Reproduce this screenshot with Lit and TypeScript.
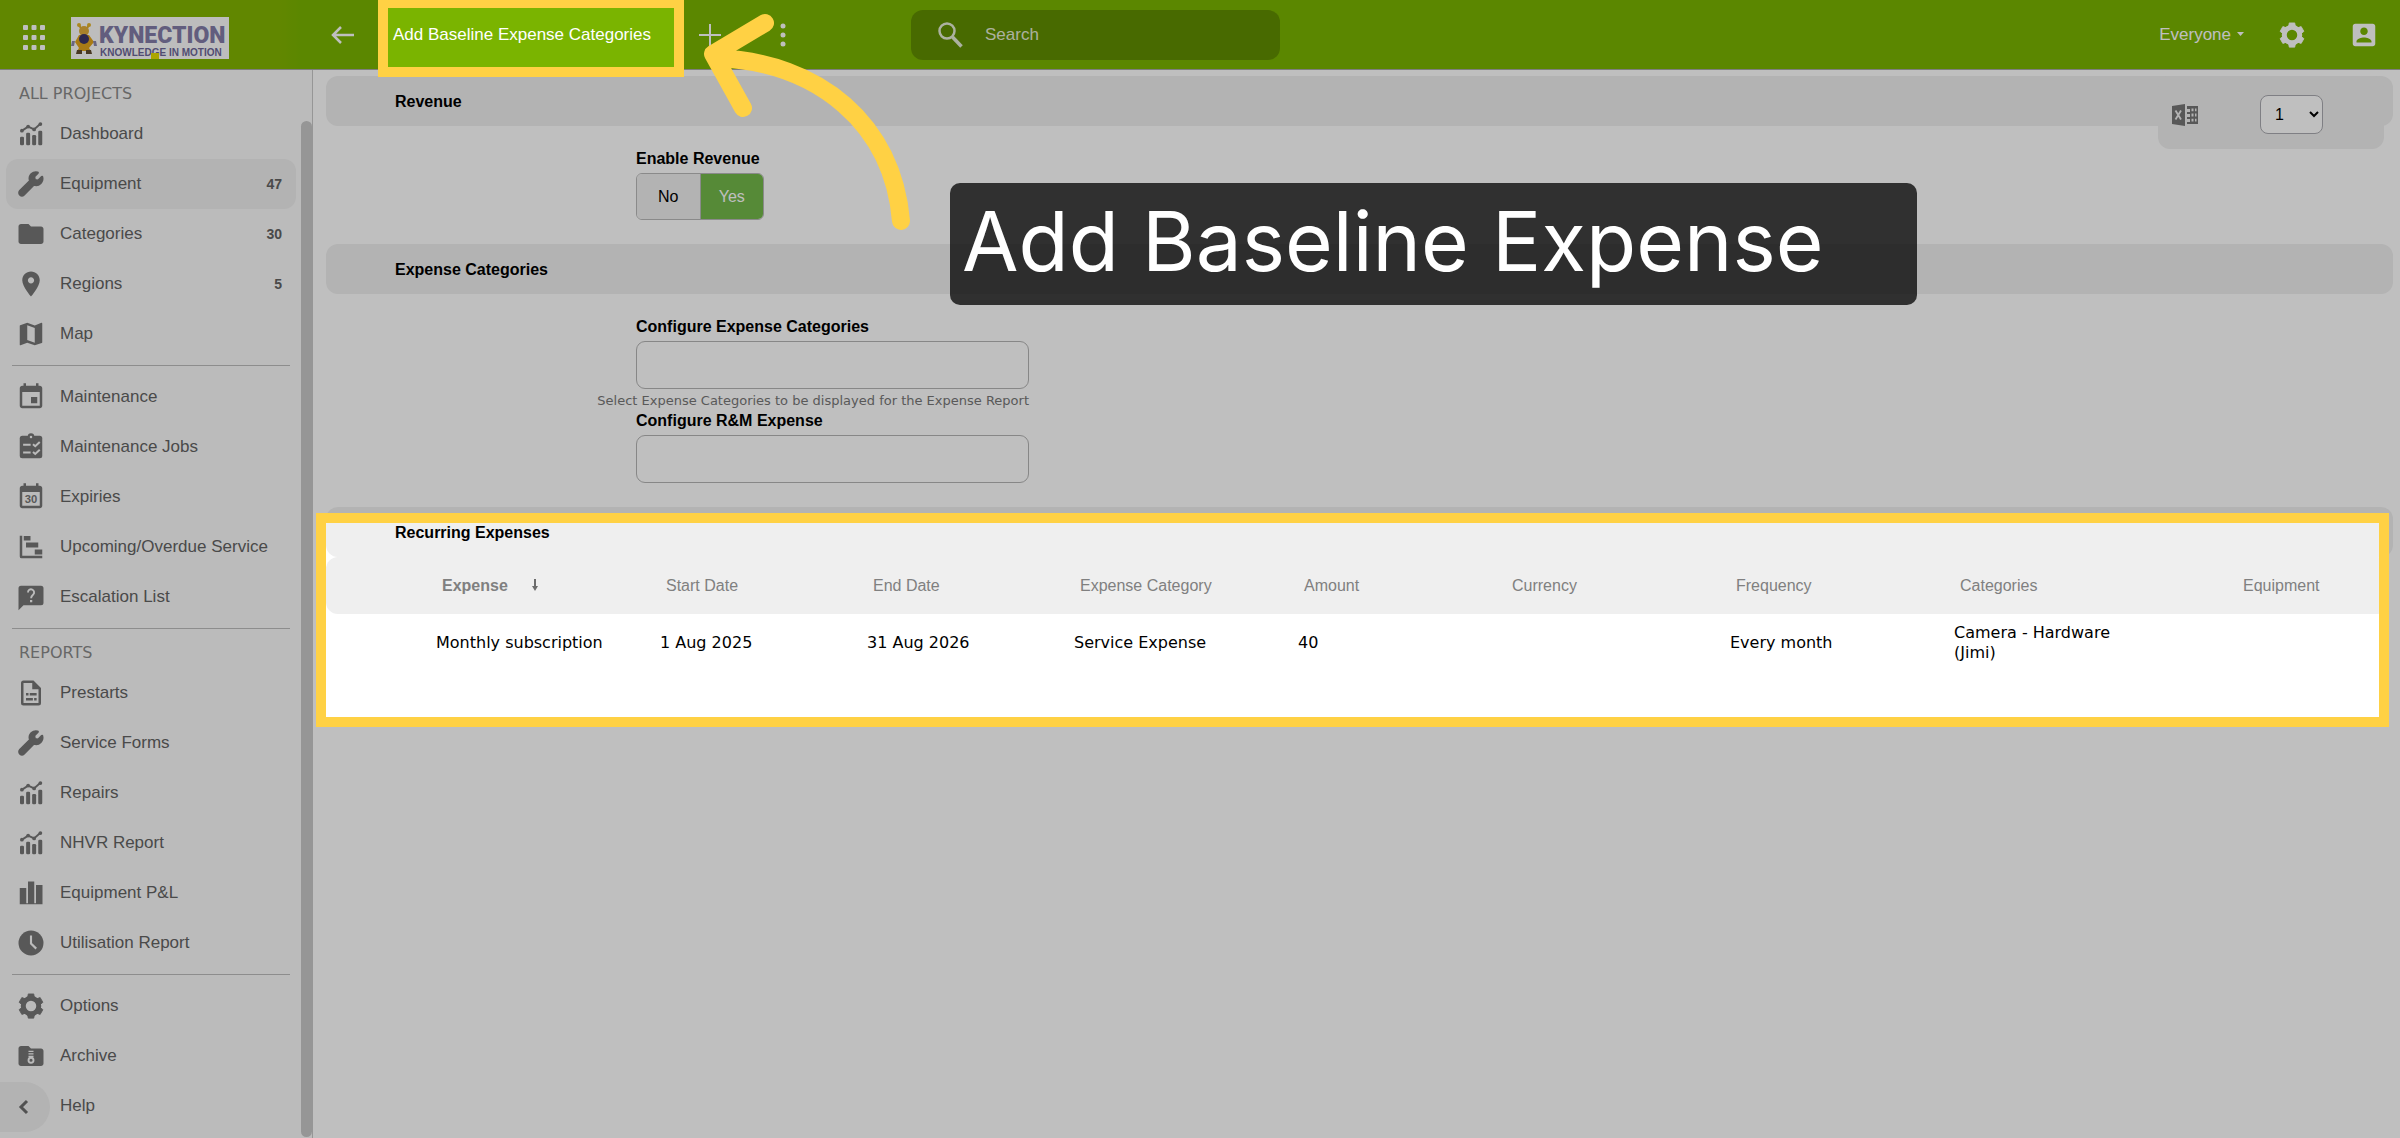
import { LitElement, html, svg, css } from "lit";
import type { SVGTemplateResult } from "lit";
import { customElement, property, state } from "lit/decorators.js";
import { classMap } from "lit/directives/class-map.js";

const WRENCH =
  "M507.73 109.1c-2.24-9.03-13.54-12.09-20.12-5.51l-74.36 74.36-67.88-11.31-11.31-67.88 74.36-74.36c6.62-6.62 3.43-17.9-5.66-20.16-47.38-11.74-99.55.91-136.58 37.93-39.64 39.64-50.55 97.1-34.05 147.2L18.74 402.76c-24.99 24.99-24.99 65.51 0 90.5 24.99 24.99 65.51 24.99 90.5 0l213.21-213.21c50.12 16.71 107.47 5.68 147.37-34.22 37.07-37.07 49.7-89.32 37.91-136.73z";
const CALENDAR =
  "M16 1v2H8V1H6v2H5c-1.11 0-1.99.9-1.99 2L3 19c0 1.1.89 2 2 2h14c1.1 0 2-.9 2-2V5c0-1.1-.9-2-2-2h-1V1h-2zm3 18H5V8h14v11z";

const ICONS: Record<string, SVGTemplateResult> = {
  chart: svg`
    <rect x="3.2" y="14.1" width="3.2" height="6.9" rx="1"/>
    <rect x="8.1" y="10.9" width="3.2" height="10.1" rx="1"/>
    <rect x="12.9" y="12.8" width="3.2" height="8.2" rx="1"/>
    <rect x="17.8" y="9.3" width="3.2" height="11.7" rx="1"/>
    <path d="M4.9 9.3 9.7 6.1l4.8 2.2 4.8-4.3" fill="none" stroke="currentColor" stroke-width="1.5"/>
    <circle cx="4.7" cy="9.3" r="1.5"/><circle cx="9.7" cy="6" r="1.5"/>
    <circle cx="14.5" cy="8.3" r="1.5"/><circle cx="19.5" cy="4" r="1.5"/>`,
  wrench: svg`<g transform="translate(2.4 2.400) scale(.037)"><path d=${WRENCH} stroke="currentColor" stroke-width="36" stroke-linejoin="round"/></g>`,
  folder: svg`<path d="M10 4H4c-1.1 0-1.99.9-1.99 2L2 18c0 1.1.9 2 2 2h16c1.1 0 2-.9 2-2V8c0-1.1-.9-2-2-2h-8l-2-2z"/>`,
  pin: svg`<path d="M12 2C8.13 2 5 5.13 5 9c0 5.25 7 13 7 13s7-7.75 7-13c0-3.87-3.13-7-7-7zm0 9.5c-1.38 0-2.5-1.12-2.5-2.5s1.12-2.5 2.5-2.5 2.5 1.12 2.5 2.5-1.12 2.5-2.5 2.5z"/>`,
  map: svg`<path d="M20.5 3l-.16.03L15 5.1 9 3 3.36 4.9c-.21.07-.36.25-.36.48V20.5c0 .28.22.5.5.5l.16-.03L9 18.9l6 2.1 5.64-1.9c.21-.07.36-.25.36-.48V3.5c0-.28-.22-.5-.5-.5zM15 19l-6-2.11V5l6 2.11V19z"/>`,
  event: svg`<path d="M17 12h-5v5h5v-5z"/><path d=${CALENDAR}/>`,
  clipboard: svg`
    <rect x="3" y="3" width="18" height="18" rx="2"/><circle cx="12" cy="3.6" r="2.6"/>
    <circle cx="12" cy="4" r="1" fill="#fafafa"/>
    <path d="M5.7 10.1h6M5.7 16.3h6M13.6 9.8l1.8 1.6L19 8M13.6 16l1.8 1.6 3.6-3.4" fill="none" stroke="#fafafa" stroke-width="1.6"/>`,
  calendar30: svg`<path d=${CALENDAR}/><text x="12" y="16.8" text-anchor="middle" font-size="9" font-weight="700" font-family="Liberation Sans, sans-serif">30</text>`,
  gantt: svg`<path d="M3 3h2v16h16v2H4.5Q3 21 3 19.5zM6.2 3.2h5.4v3.6H6.2zM8 8.4h9.8v4H8zM15 14h6v4h-6z"/>`,
  question: svg`
    <path d="M4 3h16a2 2 0 0 1 2 2v11.500a2 2 0 0 1-2 2H6L2 22.500V5a2 2 0 0 1 2-2z"/>
    <path d="M9.600 8.400a2.450 2.450 0 1 1 4.100 1.700c-.9.800-1.600 1.200-1.600 2.900" fill="none" stroke="#fafafa" stroke-width="1.500"/>
    <rect x="11.200" y="14.400" width="1.800" height="1.800" fill="#fafafa"/>`,
  file: svg`
    <path fill-rule="evenodd" d="M6 2h8l6 6v12a2 2 0 0 1-2 2H6a2 2 0 0 1-2-2V4a2 2 0 0 1 2-2zM6 4v16h12V9h-5V4z"/>
    <path d="M8 12h2v2H8zM11 12h5.500v2H11zM8 16h5.500v2H8zM14.500 16h2v2h-2z"/>`,
  bars: svg`<path d="M3 8h5.200v12.200h1.400V2.700h5v17.500H16V5.600h5.200V21H3z"/>`,
  clock: svg`<circle cx="12" cy="12" r="10"/><path d="M12 6v6.500l4.200 4" fill="none" stroke="#fafafa" stroke-width="1.700"/>`,
  gear: svg`
    <circle cx="12" cy="12" r="6.200" fill="none" stroke="currentColor" stroke-width="4"/>
    ${[0, 60, 120, 180, 240, 300].map(
      (a) => svg`<path d="M9.800 2.300h4.400l.8 4.200H9z" stroke="currentColor" stroke-width=".6" stroke-linejoin="round" transform="rotate(${a} 12 12)"/>`
    )}`,
  archive: svg`
    <path d="M10 4H4c-1.100 0-2 .9-2 2v12c0 1.100.9 2 2 2h16c1.100 0 2-.9 2-2V8c0-1.100-.9-2-2-2h-8z"/>
    <path d="M10 8.300h4M10 10.300h4M10 12.300h4" stroke="#fafafa" stroke-width="1"/>
    <circle cx="12" cy="15.400" r="2" fill="none" stroke="#fafafa" stroke-width="1.500"/>`,
  account: svg`<path d="M3 5v14c0 1.100.89 2 2 2h14c1.100 0 2-.9 2-2V5c0-1.100-.9-2-2-2H5c-1.110 0-2 .9-2 2zm12 4c0 1.660-1.340 3-3 3s-3-1.340-3-3 1.340-3 3-3 3 1.340 3 3zm-9 8c0-2 4-3.100 6-3.100s6 1.100 6 3.100v1H6v-1z"/>`,
};

@customElement("ui-icon")
export class UiIcon extends LitElement {
  static styles = css`
    :host {
      display: inline-flex;
      flex: none;
      width: 30px;
      height: 30px;
    }
    .glyph {
      width: 100%;
      height: 100%;
      fill: currentColor;
    }
  `;
  @property() name = "";
  render() {
    return html`<svg class="glyph" viewBox="0 0 24 24" aria-hidden="true">${ICONS[this.name]}</svg>`;
  }
}

interface NavItem {
  icon?: string;
  label: string;
  count?: number;
  active?: boolean;
}
interface NavGroup {
  title?: string;
  items: NavItem[];
}

const NAV: NavGroup[] = [
  {
    title: "ALL PROJECTS",
    items: [
      { icon: "chart", label: "Dashboard" },
      { icon: "wrench", label: "Equipment", count: 47, active: true },
      { icon: "folder", label: "Categories", count: 30 },
      { icon: "pin", label: "Regions", count: 5 },
      { icon: "map", label: "Map" },
    ],
  },
  {
    items: [
      { icon: "event", label: "Maintenance" },
      { icon: "clipboard", label: "Maintenance Jobs" },
      { icon: "calendar30", label: "Expiries" },
      { icon: "gantt", label: "Upcoming/Overdue Service" },
      { icon: "question", label: "Escalation List" },
    ],
  },
  {
    title: "REPORTS",
    items: [
      { icon: "file", label: "Prestarts" },
      { icon: "wrench", label: "Service Forms" },
      { icon: "chart", label: "Repairs" },
      { icon: "chart", label: "NHVR Report" },
      { icon: "bars", label: "Equipment P&L" },
      { icon: "clock", label: "Utilisation Report" },
    ],
  },
  {
    items: [
      { icon: "gear", label: "Options" },
      { icon: "archive", label: "Archive" },
      { label: "Help" },
    ],
  },
];

@customElement("side-nav")
export class SideNav extends LitElement {
  static styles = css`
    :host {
      display: block;
      position: relative;
      box-sizing: border-box;
      background: #fafafa;
      border-right: 1px solid #c8c8c8;
      font: 17px/20px "Liberation Sans", Arial, sans-serif;
      color: #636363;
    }
    .group + .group {
      padding-top: 6px;
    }
    .group + .group::before {
      content: "";
      display: block;
      height: 1px;
      margin: 0 22px 6px 12px;
      background: #bdbdbd;
    }
    .title {
      margin: 0;
      padding: 2px 19px 0;
      font: 16px/31px "DejaVu Sans", Verdana, sans-serif;
      color: #8a8a8a;
    }
    .group:first-child {
      padding-top: 6px;
    }
    .list {
      list-style: none;
      margin: 0;
      padding: 0 16px 0 6px;
    }
    .item {
      display: flex;
      align-items: center;
      gap: 14px;
      height: 50px;
      padding: 0 14px 0 10px;
      border-radius: 12px;
      color: inherit;
      text-decoration: none;
    }
    .item.active {
      background: #efefef;
    }
    .item.plain {
      padding-left: 54px;
    }
    .icon {
      color: #767676;
    }
    .label {
      flex: 1;
      white-space: nowrap;
    }
    .count {
      font-size: 14px;
      font-weight: 700;
    }
    .thumb {
      position: absolute;
      top: 51px;
      right: 0;
      bottom: 1px;
      width: 11px;
      border-radius: 6px;
      background: #c8c8c8;
    }
    .collapse {
      position: absolute;
      left: 0;
      bottom: 6px;
      width: 50px;
      height: 50px;
      padding: 0 0 0 18px;
      border: 0;
      border-radius: 0 25px 25px 0;
      background: #efefef;
      color: #6c6c6c;
      text-align: left;
    }
    .chevron {
      display: block;
      width: 11px;
      height: 16px;
    }
  `;
  render() {
    return html`
      <nav aria-label="Projects">
        ${NAV.map(
          (g) => html`<section class="group">
            ${g.title ? html`<h2 class="title">${g.title}</h2>` : null}
            <ul class="list">
              ${g.items.map(
                (i) => html`<li>
                  <a href="#" class=${classMap({ item: true, active: !!i.active, plain: !i.icon })}>
                    ${i.icon ? html`<ui-icon class="icon" .name=${i.icon}></ui-icon>` : null}
                    <span class="label">${i.label}</span>
                    ${i.count ? html`<span class="count">${i.count}</span>` : null}
                  </a>
                </li>`
              )}
            </ul>
          </section>`
        )}
      </nav>
      <div class="thumb"></div>
      <button class="collapse" aria-label="Collapse menu">
        <svg class="chevron" viewBox="0 0 11 16"><path d="M9 2 3 8l6 6" fill="none" stroke="currentColor" stroke-width="3"/></svg>
      </button>
    `;
  }
}

@customElement("top-bar")
export class TopBar extends LitElement {
  static styles = css`
    :host {
      display: flex;
      align-items: center;
      box-sizing: border-box;
      height: 70px;
      border-bottom: 1px solid #a8a8a8;
      background: linear-gradient(90deg, #82b500 0 280px, #7ab400 300px);
      color: #fff;
      font: 17px/20px "Liberation Sans", Arial, sans-serif;
    }
    .brand {
      flex: none;
      display: flex;
      align-items: center;
      gap: 26px;
      box-sizing: border-box;
      width: 313px;
      padding-left: 23px;
      padding-top: 6px;
    }
    .button {
      flex: none;
      display: flex;
      align-items: center;
      justify-content: center;
      width: 36px;
      height: 50px;
      padding: 0;
      border: 0;
      background: none;
      color: inherit;
      font: inherit;
    }
    .apps {
      width: 22px;
      height: 26px;
    }
    .logo {
      width: 158px;
      height: 42px;
    }
    .back {
      width: 60px;
    }
    .tab {
      flex: none;
      width: 286px;
      margin-left: 15px;
      padding-left: 5px;
      box-sizing: border-box;
      white-space: nowrap;
      color: inherit;
      text-decoration: none;
    }
    .add {
      margin-left: 18px;
    }
    .more {
      margin-left: 37px;
    }
    .search {
      flex: 0 1 369px;
      display: flex;
      align-items: center;
      gap: 22px;
      box-sizing: border-box;
      height: 50px;
      margin-left: 110px;
      padding: 0 27px;
      border-radius: 12px;
      background: #608e00;
    }
    .lens {
      flex: none;
      width: 25px;
      height: 26px;
    }
    .query {
      flex: 1;
      min-width: 0;
      border: 0;
      padding: 0;
      outline: 0;
      background: none;
      color: #fff;
      font: inherit;
    }
    .query::placeholder {
      color: #e6ecd6;
      opacity: 1;
    }
    .actions {
      display: flex;
      align-items: center;
      margin-left: auto;
      padding-right: 18px;
    }
    .who {
      width: auto;
      gap: 6px;
      margin-right: 30px;
    }
    .caret {
      width: 7px;
      height: 5px;
    }
    .settings {
      margin-right: 36px;
    }
  `;
  render() {
    return html`
      <div class="brand">
        <button class="button apps" aria-label="Apps">
          <svg width="22" height="26" viewBox="0 0 22 26" fill="#fff">
            ${[0, 1, 2].map((r) => [0, 1, 2].map((c) => svg`<rect x=${c * 8.5} y=${r * 10} width="5" height="5" rx="1"/>`))}
          </svg>
        </button>
        <svg class="logo" viewBox="0 0 158 42" role="img" aria-label="Kynection, knowledge in motion">
          <rect width="158" height="42" fill="#fdfdfd"/>
          <path d="M8 8 11 13M18 8l-3 5" stroke="#d9a928" stroke-width="2"/>
          <circle cx="8" cy="8" r="2" fill="#e4b52d"/><circle cx="18" cy="8" r="2" fill="#e4b52d"/>
          <circle cx="13" cy="14" r="5" fill="#e0ad3a"/>
          <path d="M4 25 8 18h10l5 7-5 6 2 3H6l2-3z" fill="#e2a51d"/>
          <circle cx="13" cy="22" r="5" fill="#3c3668"/>
          <path d="M1 24h3l-1 5H0zM22 24h3l1 5h-3z" fill="#8d88ac"/>
          <path d="M6 33h5v4H5zM15 33h5l1 4h-6z" fill="#5f4a2e"/>
          <text x="28" y="26" font-family="Roboto, sans-serif" font-size="23" font-weight="900" fill="#837ca8">KYNECTION</text>
          <text x="29" y="39" font-family="Liberation Sans, sans-serif" font-size="10" font-weight="700" fill="#6c6698">KNOWLEDGE IN MOTION</text>
          <rect x="80" y="36" width="8" height="6" fill="#e6de00"/>
        </svg>
      </div>
      <button class="button back" aria-label="Back">
        <svg width="24" height="20" viewBox="0 0 24 20" fill="none" stroke="#fff" stroke-width="2.5"><path d="M23 10H3M10 2 2 10l8 8"/></svg>
      </button>
      <a class="tab" href="#">Add Baseline Expense Categories</a>
      <button class="button add" aria-label="Add tab">
        <svg width="22" height="22" viewBox="0 0 22 22" stroke="#fff" stroke-width="2"><path d="M11 0v22M0 11h22"/></svg>
      </button>
      <button class="button more" aria-label="More">
        <svg width="6" height="24" viewBox="0 0 6 24" fill="#fff"><circle cx="3" cy="3" r="2.500"/><circle cx="3" cy="12" r="2.500"/><circle cx="3" cy="21" r="2.500"/></svg>
      </button>
      <label class="search">
        <svg class="lens" viewBox="0 0 25 26" fill="none" stroke="#e6ecd6"><circle cx="9" cy="9" r="7.500" stroke-width="2.500"/><path d="m14.500 15 9 9.500" stroke-width="3.500"/></svg>
        <input class="query" type="search" placeholder="Search" aria-label="Search" />
      </label>
      <div class="actions">
        <button class="button who">Everyone
          <svg class="caret" viewBox="0 0 7 5"><path d="M0 0h7L3.500 4z" fill="#fff"/></svg>
        </button>
        <button class="button settings" aria-label="Settings"><ui-icon name="gear"></ui-icon></button>
        <button class="button" aria-label="Account"><ui-icon name="account"></ui-icon></button>
      </div>
    `;
  }
}

const COLUMNS: { title: string; width: number; value: string }[] = [
  { title: "", width: 110, value: "" },
  { title: "Expense", width: 224, value: "Monthly subscription" },
  { title: "Start Date", width: 207, value: "1 Aug 2025" },
  { title: "End Date", width: 207, value: "31 Aug 2026" },
  { title: "Expense Category", width: 224, value: "Service Expense" },
  { title: "Amount", width: 208, value: "40" },
  { title: "Currency", width: 224, value: "" },
  { title: "Frequency", width: 224, value: "Every month" },
  { title: "Categories", width: 283, value: "Camera - Hardware (Jimi)" },
  { title: "Equipment", width: 152, value: "" },
];

@customElement("expense-form")
export class ExpenseForm extends LitElement {
  static styles = css`
    :host {
      display: block;
      position: relative;
      padding: 6px 7px 0 13px;
      background: #fff;
      color: #000;
      font: 16px/20px "Liberation Sans", Arial, sans-serif;
    }
    .bar {
      margin: 0;
      padding: 1px 69px 0;
      border-radius: 12px;
      background: #efefef;
      font: 700 16px/49px "Liberation Sans", Arial, sans-serif;
    }
    .body {
      padding: 23px 0 24px 310px;
    }
    .field {
      display: flex;
      flex-direction: column;
      width: 393px;
    }
    .label {
      margin-bottom: 4px;
      font-weight: 700;
    }
    .text {
      box-sizing: border-box;
      width: 100%;
      height: 48px;
      padding: 0 12px;
      border: 1px solid #b4b4b4;
      border-radius: 9px;
      background: #fff;
      font: inherit;
    }
    .hint {
      align-self: flex-end;
      margin-top: 2px;
      white-space: nowrap;
      color: #777;
      font: 13px/20px "DejaVu Sans", Verdana, sans-serif;
    }
    .toggle {
      display: flex;
      align-self: flex-start;
      box-sizing: border-box;
      width: 128px;
      height: 47px;
      border: 1px solid #b8b8b8;
      border-radius: 6px;
      overflow: hidden;
    }
    .option {
      flex: 1;
      display: flex;
      align-items: center;
      justify-content: center;
      background: #efefef;
    }
    .option + .option {
      border-left: 1px solid #b8b8b8;
    }
    .option.on {
      background: #73b84a;
      color: #fff;
    }
    .radio {
      appearance: none;
      width: 0;
      height: 0;
      margin: 0;
    }
    .tools {
      position: absolute;
      top: 6px;
      right: 16px;
      display: flex;
      align-items: center;
      justify-content: space-between;
      box-sizing: border-box;
      width: 226px;
      height: 73px;
      padding: 4px 61px 0 14px;
      border-radius: 12px;
      background: #efefef;
    }
    .export {
      padding: 0;
      border: 0;
      background: none;
      width: 26px;
      height: 22px;
    }
    .page {
      width: 63px;
      height: 39px;
      padding: 0 0 0 10px;
      border: 1px solid #aaaab0;
      border-radius: 8px;
      background: #fff;
      color: #000;
      font: 16px "Liberation Sans", Arial, sans-serif;
    }
    .table {
      width: calc(100% - 4px);
      table-layout: fixed;
      border-collapse: separate;
      border-spacing: 0;
    }
    .head {
      box-sizing: border-box;
      height: 57px;
      padding: 1px 0 0 6px;
      background: #efefef;
      color: #808080;
      font-weight: 400;
      text-align: left;
    }
    .head.sorted {
      font-weight: 700;
    }
    .head:first-child {
      border-radius: 12px 0 0 12px;
    }
    .head:last-child {
      border-radius: 0 12px 12px 0;
    }
    .sort {
      width: 6px;
      height: 12px;
      margin-left: 24px;
    }
    .cell {
      height: 58px;
      padding: 0 100px 0 0;
      font: 16px/20px "DejaVu Sans", Verdana, sans-serif;
    }
    .cell.line {
      padding: 0;
      white-space: nowrap;
    }
  `;
  @state() private revenue = true;

  private option(label: string, value: boolean) {
    return html`<label class=${classMap({ option: true, on: value && this.revenue === value })}>
      <input class="radio" type="radio" name="revenue" .checked=${this.revenue === value} @change=${() => (this.revenue = value)} />${label}
    </label>`;
  }

  render() {
    return html`
      <h2 class="bar">Revenue</h2>
      <div class="body">
        <div class="field">
          <span class="label" id="rev">Enable Revenue</span>
          <div class="toggle" role="radiogroup" aria-labelledby="rev">${this.option("No", false)}${this.option("Yes", true)}</div>
        </div>
      </div>
      <h2 class="bar">Expense Categories</h2>
      <div class="body">
        <div class="field">
          <label class="label" for="cats">Configure Expense Categories</label>
          <input class="text" id="cats" type="text" />
          <span class="hint">Select Expense Categories to be displayed for the Expense Report</span>
          <label class="label" for="rm">Configure R&amp;M Expense</label>
          <input class="text" id="rm" type="text" />
        </div>
      </div>
      <h2 class="bar">Recurring Expenses</h2>
      <table class="table">
        <colgroup>${COLUMNS.map((c) => html`<col style="width:${c.width}px" />`)}</colgroup>
        <thead>
          <tr>
            ${COLUMNS.map(
              (c, i) => html`<th class=${classMap({ head: true, sorted: i === 1 })} scope="col">${c.title}${i === 1
                ? html`<svg class="sort" viewBox="0 0 6 12"><path d="M2 0h2v7h2l-3 5-3-5h2z" fill="#6c6c6c"/></svg>`
                : null}</th>`
            )}
          </tr>
        </thead>
        <tbody>
          <tr>
            ${COLUMNS.map((c, i) => html`<td class=${classMap({ cell: true, line: i !== 8 })}>${c.value}</td>`)}
          </tr>
        </tbody>
      </table>
      <div class="tools">
        <button class="export" aria-label="Export to Excel">
          <svg width="26" height="22" viewBox="0 0 26 22">
            <path d="M0 2 13 0v22L0 20z" fill="#767676"/>
            <path d="m3.500 6.500 5.500 9M9 6.500l-5.500 9" stroke="#efefef" stroke-width="1.800"/>
            <path fill-rule="evenodd" fill="#767676" d="M15 2h11v18H15v-2h3v-3h-3v-2h3v-3h-3V8h3V5h-3zM19.500 4.500v2.800h2V4.500zm3.500 0v2.800h1.500V4.500zM19.500 9.500v3h2v-3zm3.500 0v3h1.500v-3zM19.500 14.700v2.800h2v-2.800zm3.500 0v2.800h1.500v-2.800z"/>
          </svg>
        </button>
        <select class="page" aria-label="Page"><option>1</option></select>
      </div>
    `;
  }
}

@customElement("app-root")
export class AppRoot extends LitElement {
  static styles = css`
    :host {
      display: block;
      position: relative;
      overflow: hidden;
    }
    .shell {
      display: grid;
      grid-template-columns: 313px minmax(0, 1fr);
      grid-template-rows: auto 1fr;
      min-height: 100vh;
    }
    .top {
      grid-column: 1 / -1;
    }
    .dim,
    .spot,
    .arrow,
    .callout {
      position: absolute;
      pointer-events: none;
      box-sizing: border-box;
    }
    /* Shade over the page, with openings for the tab and the table. */
    .dim {
      inset: 0;
      background: rgba(0, 0, 0, 0.25);
      clip-path: polygon(
        evenodd,
        0 0, 100% 0, 100% 100%, 0 100%, 0 0,
        388px 8px, 674px 8px, 674px 67px, 388px 67px, 388px 8px, 0 0,
        326px 523px, calc(100% - 21px) 523px, calc(100% - 21px) 717px, 326px 717px, 326px 523px, 0 0
      );
    }
    .spot {
      border: 10px solid #ffd144;
    }
    .spot.tab {
      left: 378px;
      top: 0;
      width: 306px;
      height: 77px;
      border-top-width: 8px;
    }
    .spot.rows {
      left: 316px;
      right: 11px;
      top: 513px;
      height: 214px;
    }
    .arrow {
      left: 690px;
      top: 0;
      width: 230px;
      height: 240px;
    }
    .callout {
      left: 950px;
      top: 183px;
      width: 967px;
      height: 122px;
      margin: 0;
      padding: 0 12px;
      border-radius: 10px;
      background: rgba(0, 0, 0, 0.75);
      color: #fff;
      white-space: nowrap;
      font: 400 82px/118px Inter, sans-serif;
    }
  `;
  render() {
    return html`
      <div class="shell">
        <top-bar class="top"></top-bar>
        <side-nav></side-nav>
        <expense-form></expense-form>
      </div>
      <div class="dim"></div>
      <div class="spot tab"></div>
      <div class="spot rows"></div>
      <svg class="arrow" viewBox="690 0 230 240" fill="none" stroke="#ffd144" stroke-width="18" stroke-linecap="round" stroke-linejoin="round" aria-hidden="true">
        <path d="M765 23 713 54 743 108M901 221C893 125 820 62 716 58"/>
      </svg>
      <p class="callout">Add Baseline Expense</p>
    `;
  }
}
